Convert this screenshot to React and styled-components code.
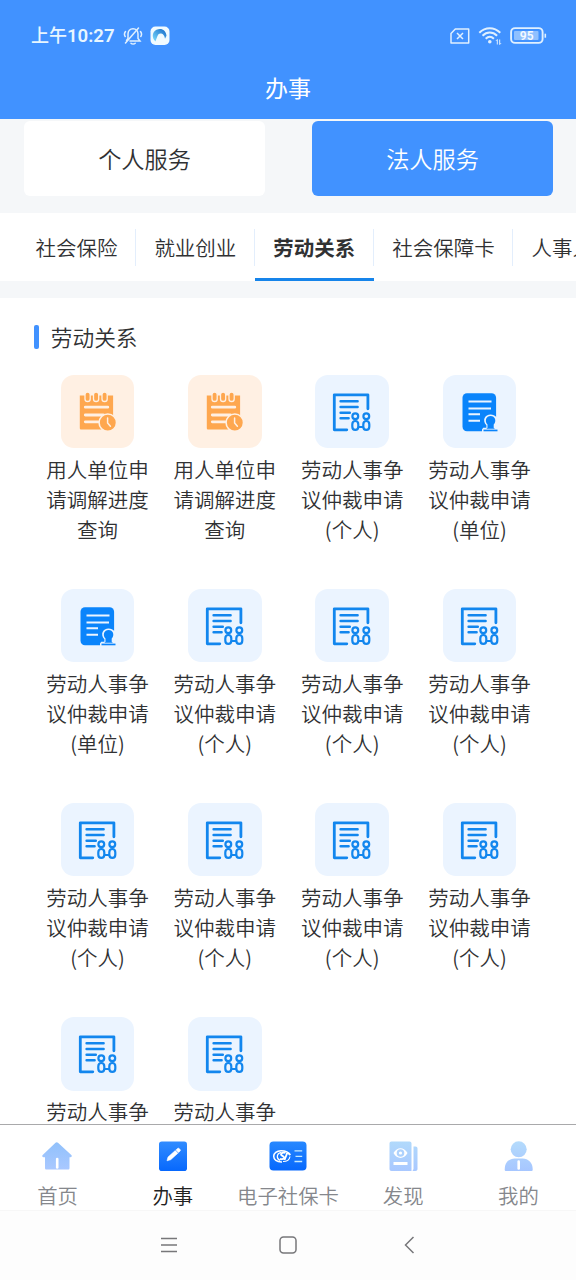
import React, { useState } from "react";
import styled, { createGlobalStyle } from "styled-components";

const GlobalStyle = createGlobalStyle`
  * {
    box-sizing: border-box;
  }

  body {
    margin: 0;
    font-family: "Noto Sans CJK SC", "Noto Sans", sans-serif;
    font-weight: 350;
    color: #303133;
    background-color: #fff;
  }

  button {
    font: inherit;
    color: inherit;
    border: 0;
    padding: 0;
    background: none;
    cursor: pointer;
  }

  svg {
    display: block;
    flex: none;
  }
`;

const Phone = styled.div`
  display: flex;
  flex-direction: column;
  width: 576px;
  height: 1280px;
  overflow: hidden;
  background-color: #fff;
`;

const Header = styled.header`
  flex: none;
  height: 119px;
  background-color: #4192ff;
  color: #fff;
`;

const StatusBar = styled.div`
  display: flex;
  align-items: center;
  height: 58px;
  padding: 13px 29px 0 31px;
`;

const Time = styled.span`
  font-family: Roboto, "Noto Sans CJK SC", sans-serif;
  font-size: 18.6px;
  font-weight: 600;
  line-height: 24px;
  color: #e8f6ff;
  margin-right: 8px;
`;

const TimePrefix = styled.span`
  font-size: 18px;
  font-weight: 500;
`;

const StatusIcons = styled.div`
  display: flex;
  align-items: center;
  gap: ${({ $gap }) => $gap};
  margin-left: ${({ $end }) => ($end ? 'auto' : '0')};
`;

const Title = styled.h1`
  margin: 12px 0 0;
  font-size: 23px;
  font-weight: 400;
  line-height: 34px;
  text-align: center;
`;

const SegmentBar = styled.div`
  flex: none;
  display: flex;
  gap: 47px;
  height: 94px;
  padding: 2px 23px 17px 24px;
  background-color: #f5f7f9;
`;

const Segment = styled.button`
  flex: 1;
  height: 75px;
  padding-bottom: 1px;
  border-radius: 6px;
  font-size: 23.2px;
  background-color: ${({ $active }) => ($active ? '#4192ff' : '#fff')};
  color: ${({ $active }) => ($active ? '#fff' : '#303133')};
`;

const TabBar = styled.nav`
  flex: none;
  display: flex;
  height: 68px;
  padding-left: 17.4px;
  overflow: hidden;
`;

const Tab = styled.button`
  flex: none;
  display: flex;
  flex-direction: column;
  height: 68px;
  font-size: 20.5px;
  font-weight: ${({ $active }) => ($active ? 700 : 350)};

  &::after {
    content: "";
    width: 100%;
    height: 3px;
    margin-top: 12px;
    background-color: ${({ $active }) => ($active ? '#1684ea' : 'transparent')};
  }
`;

const TabText = styled.span`
  margin-top: 16px;
  padding: 0 17.8px 0 18.1px;
  height: 37px;
  line-height: 37px;
  white-space: nowrap;
  border-right: 1px solid #e3eefc;
`;

const Divider = styled.div`
  flex: none;
  height: 17px;
  background-color: #f5f7f9;
`;

const Content = styled.main`
  flex: 1;
  min-height: 0;
  overflow: hidden;
  padding: 24px 32px 0 33.8px;
`;

const SectionTitle = styled.h2`
  display: flex;
  align-items: center;
  margin: 0 0 23.5px;
  height: 29px;
  font-size: 21.7px;
  font-weight: 350;

  &::before {
    content: "";
    width: 5px;
    height: 24px;
    margin-right: 12px;
    border-radius: 2px;
    background-color: #4192ff;
  }
`;

const Grid = styled.div`
  display: grid;
  grid-template-columns: repeat(4, 127.35px);
  row-gap: 44px;
`;

const Service = styled.div`
  display: flex;
  flex-direction: column;
  align-items: center;
`;

const IconBox = styled.div`
  display: flex;
  width: 73.5px;
  height: 73.5px;
  border-radius: 13px;
  background-color: ${({ $warm }) => ($warm ? '#fff0e3' : '#ebf4ff')};
`;

const ServiceLabel = styled.span`
  width: 110px;
  margin: 5.7px 0 1px;
  font-size: 20.5px;
  line-height: 30px;
  text-align: center;
`;

const BottomNav = styled.nav`
  flex: none;
  display: flex;
  height: 87px;
  border-top: 1px solid #a9a9ab;
  border-bottom: 1px solid #f7f7f7;
  background-color: #fff;
`;

const NavItem = styled.button`
  flex: 1;
  display: flex;
  flex-direction: column;
  align-items: center;
  padding-top: 15px;
  font-size: 20.4px;
  line-height: 30px;
  white-space: nowrap;
  color: ${({ $active }) => ($active ? '#222' : '#85878c')};

  svg {
    margin-bottom: 8px;
  }
`;

const SystemNav = styled.div`
  flex: none;
  display: flex;
  justify-content: center;
  align-items: center;
  gap: 96px;
  height: 69px;
  padding-bottom: 2px;
  background-color: #fdfdfd;
`;

const MuteIcon = () => (
  <svg width="20" height="20" viewBox="0 0 20 20" fill="none" stroke="#e0f0ff" strokeWidth="1.5" strokeLinecap="round">
    <path d="M5 12.500V8C5 5 7 2.700 10 2.700S15 5 15 8v4.500l2 2.500H7M5 12.500 3.500 14.500" />
    <path d="M8 17.300c1 1 3.200 1 4.200 0M2.500 17 15.500 2M2.500 5.500c-1.300 1.700-1.300 3.500-.3 5M17.500 5.500c1.300 1.700 1.300 3.500.3 5" />
  </svg>
);

const BrowserIcon = () => (
  <svg width="20" height="20" viewBox="0 0 20 20">
    <defs>
      <linearGradient id="swirl" x1="0" y1="1" x2="1" y2="0">
        <stop offset="0" stopColor="#7fe0ff" />
        <stop offset="1" stopColor="#1268c8" />
      </linearGradient>
    </defs>
    <rect x="0.500" y="0.500" width="19" height="18.500" rx="5" fill="#f1fbff" />
    <path d="M5.500 15.500C1.500 12 2 6 6.500 3.800c4.500-2.300 9.500 0 10 6l-1.500 3c-.4-3-1.700-5-3.800-5.300-2.600-.2-3.500 1.500-4.300 4-.5 1.500-1 2.400-1.400 4z" fill="url(#swirl)" />
  </svg>
);

const SimIcon = () => (
  <svg width="20" height="16" viewBox="0 0 20 16" fill="none" stroke="#e0f0ff" strokeWidth="1.500">
    <path d="M5.300 1H18.700V15H1V5.500z" strokeLinejoin="round" />
    <path d="M7 5l6 6M13 5l-6 6" />
  </svg>
);

const WifiIcon = () => (
  <svg width="24" height="20" viewBox="0 0 24 20" fill="none" stroke="#e0f0ff" strokeWidth="2">
    <path d="M1.300 6.700C7.500.7 16 .7 22.300 6.700M4.500 9.700c4.400-4.200 10.200-4.200 14.600 0M7.700 12.700c2.500-2.400 5.700-2.400 8.200 0" />
    <circle cx="11.800" cy="15.700" r="1.800" fill="#e0f0ff" stroke="none" />
    <path d="M19.300 18.500V13.500l-1.300 1.300M21.700 13.500v5l1.300-1.300" strokeWidth="1" />
  </svg>
);

const BatteryIcon = () => (
  <svg width="37" height="18" viewBox="0 0 37 18">
    <rect x="1.100" y="1.100" width="31.500" height="14.800" rx="4" fill="none" stroke="#e0f0ff" strokeWidth="1.900" />
    <rect x="4" y="4" width="24.500" height="9" rx="1" fill="#8fc0ff" />
    <path d="M35.300 6.700v4" stroke="#e0f0ff" strokeWidth="1.600" />
    <text x="16.700" y="12.900" textAnchor="middle" fontFamily="Roboto, sans-serif" fontSize="12" fontWeight="600" fill="#f4faff">95</text>
  </svg>
);

const CalendarIcon = () => (
  <svg width="73.5" height="73.5" viewBox="0.700 0 73.5 73.5">
    <path d="M19.500 20.500h33.300v34H21c-1 0-1.500-.5-1.500-1.500z" fill="#fea74f" />
    <g fill="#fea74f" stroke="#fff0e3" strokeWidth="1.300">
      <rect x="24.700" y="17" width="5.200" height="9.500" rx="2.600" />
      <rect x="33.200" y="17" width="5.200" height="9.500" rx="2.600" />
      <rect x="41.700" y="17" width="5.200" height="9.500" rx="2.600" />
    </g>
    <path d="M25 32.200h22.500M25 40h18M25 46.800h13" stroke="#fff0e3" strokeWidth="2.800" strokeLinecap="round" />
    <circle cx="47.500" cy="47.700" r="8.700" fill="#fea74f" stroke="#fff0e3" strokeWidth="1.600" />
    <path d="M47.300 43v5l2.800 3.200" fill="none" stroke="#fff0e3" strokeWidth="1.500" strokeLinecap="round" />
  </svg>
);

const PeopleDocIcon = () => (
  <svg width="73.5" height="73.5" viewBox="0.700 0 73.5 73.5" fill="none" stroke="#1286ee" strokeWidth="2.800">
    <path d="M32.500 54.800H20V19.800h33.600v14" strokeLinejoin="round" strokeLinecap="round" />
    <path d="M26.300 26.300h17M26.300 32h17M26.300 37.700h9.200M26.300 43.300h8" strokeLinecap="round" strokeWidth="2.500" />
    <g strokeWidth="2.200">
      <circle cx="41" cy="41.300" r="2.900" />
      <circle cx="52" cy="41.300" r="2.900" />
      <path d="M41 46c2.200 0 3 1 3 3.500v2c0 2.300-1 3.400-3 3.400s-3-1.100-3-3.400v-2c0-2.500.8-3.500 3-3.500zM52 46c2.200 0 3 1 3 3.500v2c0 2.300-1 3.400-3 3.400s-3-1.100-3-3.400v-2c0-2.500.8-3.500 3-3.500zM44 52h5" />
    </g>
  </svg>
);

const StampDocIcon = () => (
  <svg width="73.5" height="73.5" viewBox="0 0 73.5 73.5">
    <rect x="19.500" y="18.300" width="33.600" height="38" rx="4.500" fill="#0a84fb" />
    <path d="M25.500 26.600h23M25.500 33.500h22.500M25.500 39.300h11.500M25.500 45.700h11.500" stroke="#ebf4ff" strokeWidth="2" />
    <path d="M39 57.500V54.500l1.200-1.800h3.200v-2.400C38.700 45 42 39.400 47.600 39.400c2.300 0 4.400.9 5.700 2.600H54v15.500z" fill="#ebf4ff" />
    <path d="M43.300 53.700l1.200-.9v-3.200c-3.300-4-1.200-8.700 3.100-8.700s6.400 4.700 3.100 8.700v3.200l1.200.9z" fill="#0a84fb" />
    <path d="M40.500 54.600h14v1.700h-14z" fill="#0a84fb" />
  </svg>
);

const HomeIcon = () => (
  <svg width="32" height="32" viewBox="0 0 32 32">
    <defs>
      <linearGradient id="home" x1="0" y1="0" x2="0" y2="1">
        <stop offset="0" stopColor="#91c1fb" />
        <stop offset="1" stopColor="#a9c8ff" />
      </linearGradient>
    </defs>
    <path d="M13.500 2.800c.8-.8 1.700-.8 2.500 0L29.300 15c1 1 .4 2.200-.8 2.200H27.500V28c0 1-.6 1.600-1.500 1.600H4.500C3.500 29.600 3 29 3 28V17.200H1.500c-1.200 0-1.700-1.300-.8-2.200z" fill="url(#home)" />
    <path d="M15.200 19v8.500" stroke="#fff" strokeWidth="2.600" strokeLinecap="round" />
  </svg>
);

const EditIcon = () => (
  <svg width="32" height="32" viewBox="0 0 32 32">
    <defs>
      <linearGradient id="edit" x1="0" y1="0" x2="0" y2="1">
        <stop offset="0" stopColor="#318cff" />
        <stop offset="1" stopColor="#0768fd" />
      </linearGradient>
    </defs>
    <rect x="2" y="1.500" width="28" height="29.500" rx="2.800" fill="url(#edit)" />
    <path d="M10 20.800l1-3.700 7.300-6.600 2.600 2.700-7.200 6.500zM19 9.900l1.500-1.300c.6-.5 1.200-.5 1.700 0l.9 1c.5.600.4 1.100-.1 1.600l-1.500 1.300z" fill="#fff" stroke="#fff" strokeWidth=".6" strokeLinejoin="round" />
  </svg>
);

const CardIcon = () => (
  <svg width="38" height="32" viewBox="0 0 38 32">
    <defs>
      <linearGradient id="card" x1="0" y1="0" x2="0" y2="1">
        <stop offset="0" stopColor="#2788ff" />
        <stop offset="1" stopColor="#0768fd" />
      </linearGradient>
    </defs>
    <rect x="0.500" y="1.500" width="37" height="29" rx="4" fill="url(#card)" />
    <g fill="none" stroke="#fff">
      <path d="M13 22c-5.500.2-8.300-2.500-8.300-5.700 0-3 3-5.600 7.300-5.600 4.500 0 8 2 9 4.500" strokeWidth="1.500" />
      <path d="M11.200 20.500c-4-1.500-4-7 1-8.200M14 21.500c4 0 6.500-2 7-5" strokeWidth="1.200" />
      <path d="M16.500 12.800c-2-1-5 .4-4.300 2 .5 1.200 3.300 1.300 2.700 3.200-.5 1.300-2.600 1.500-4 .7M15.500 20l2.500-6.500M17.500 13.800c1.400-1 3-.4 3.500 1.200" strokeWidth="1.900" />
    </g>
    <path d="M25.500 10.800h7.700M26.500 16.300h6.700M25.500 21.500h7.700" stroke="#c3e9ff" strokeWidth="1.300" />
  </svg>
);

const DiscoverIcon = () => (
  <svg width="32" height="32" viewBox="0 0 32 32">
    <defs>
      <linearGradient id="discover" x1="0" y1="0" x2="0" y2="1">
        <stop offset="0" stopColor="#b1d9fb" />
        <stop offset="1" stopColor="#a9c8ff" />
      </linearGradient>
    </defs>
    <path d="M4.500 1.500h18c1.200 0 2 .8 2 2V31h-20c-1.200 0-2-.8-2-2V3.500c0-1.200.8-2 2-2zM26.500 6.500h2c1.200 0 2 .8 2 2V29c0 1.200-.8 2-2 2h-3l1-2z" fill="url(#discover)" />
    <path d="M6.500 13c3.500-6.500 10.500-6.500 14 0-3.500 6.500-10.500 6.500-14 0z" fill="#fff" />
    <circle cx="13.500" cy="13" r="3.800" fill="#aed2fd" />
    <circle cx="13.500" cy="13" r="1.600" fill="#fff" />
    <rect x="6.500" y="22" width="14" height="3" fill="#fff" />
  </svg>
);

const UserIcon = () => (
  <svg width="32" height="32" viewBox="0 0 32 32">
    <defs>
      <linearGradient id="user" x1="0" y1="0" x2="0" y2="31" gradientUnits="userSpaceOnUse">
        <stop offset="0" stopColor="#b5dcfc" />
        <stop offset="1" stopColor="#a6c6ff" />
      </linearGradient>
    </defs>
    <circle cx="16.700" cy="9.300" r="8" fill="url(#user)" />
    <path d="M2.700 29.500C2.700 22.500 7.200 18.500 12.700 18.500h8c5.500 0 10 4 10 11 0 1-.5 1.500-1.500 1.500h-25C3.200 31 2.700 30.500 2.700 29.500z" fill="url(#user)" />
    <path d="M16.700 21.500v7" stroke="#fff" strokeWidth="2.600" strokeLinecap="round" />
  </svg>
);

const serviceIcons = {
  calendar: CalendarIcon,
  people: PeopleDocIcon,
  stamp: StampDocIcon,
};

const progress = { name: '用人单位申请调解进度查询', icon: 'calendar' };
const personal = { name: '劳动人事争议仲裁申请(个人)', icon: 'people' };
const company = { name: '劳动人事争议仲裁申请(单位)', icon: 'stamp' };

const services = [
  progress, progress, personal, company,
  company, personal, personal, personal,
  personal, personal, personal, personal,
  personal, personal,
];

const tabs = ['社会保险', '就业创业', '劳动关系', '社会保障卡', '人事人才'];

const navItems = [
  { label: '首页', Icon: HomeIcon },
  { label: '办事', Icon: EditIcon },
  { label: '电子社保卡', Icon: CardIcon },
  { label: '发现', Icon: DiscoverIcon },
  { label: '我的', Icon: UserIcon },
];

const App = () => {
  const [segment, setSegment] = useState('法人服务');
  const [tab, setTab] = useState('劳动关系');
  const [page, setPage] = useState('办事');

  return (
    <Phone>
      <GlobalStyle />
      <Header>
        <StatusBar>
          <Time><TimePrefix>上午</TimePrefix>10:27</Time>
          <StatusIcons $gap="7px">
            <MuteIcon />
            <BrowserIcon />
          </StatusIcons>
          <StatusIcons $gap="8px" $end>
            <SimIcon />
            <WifiIcon />
            <BatteryIcon />
          </StatusIcons>
        </StatusBar>
        <Title>办事</Title>
      </Header>

      <SegmentBar>
        {['个人服务', '法人服务'].map((name) => (
          <Segment key={name} $active={segment === name} onClick={() => setSegment(name)}>
            {name}
          </Segment>
        ))}
      </SegmentBar>

      <TabBar>
        {tabs.map((name) => (
          <Tab key={name} $active={tab === name} onClick={() => setTab(name)}>
            <TabText>{name}</TabText>
          </Tab>
        ))}
      </TabBar>
      <Divider />

      <Content>
        <SectionTitle>{tab}</SectionTitle>
        <Grid>
          {services.map(({ name, icon }, index) => {
            const Icon = serviceIcons[icon];
            return (
              <Service key={index}>
                <IconBox $warm={icon === 'calendar'}><Icon /></IconBox>
                <ServiceLabel>{name}</ServiceLabel>
              </Service>
            );
          })}
        </Grid>
      </Content>

      <BottomNav>
        {navItems.map(({ label, Icon }) => (
          <NavItem key={label} $active={page === label} onClick={() => setPage(label)}>
            <Icon />
            {label}
          </NavItem>
        ))}
      </BottomNav>

      <SystemNav>
        <svg width="24" height="24" viewBox="0 0 24 24" stroke="#77777a" strokeWidth="1.5">
          <path d="M5 5.500h16M5 12h16M5 18.500h16" />
        </svg>
        <svg width="24" height="24" viewBox="0 0 24 24" fill="none" stroke="#77777a" strokeWidth="1.500">
          <rect x="4" y="4" width="16" height="16" rx="3.500" />
        </svg>
        <svg width="24" height="24" viewBox="0 0 24 24" fill="none" stroke="#77777a" strokeWidth="1.500">
          <path d="M17.500 4 9.500 12l8 8" />
        </svg>
      </SystemNav>
    </Phone>
  );
};

export default App;
